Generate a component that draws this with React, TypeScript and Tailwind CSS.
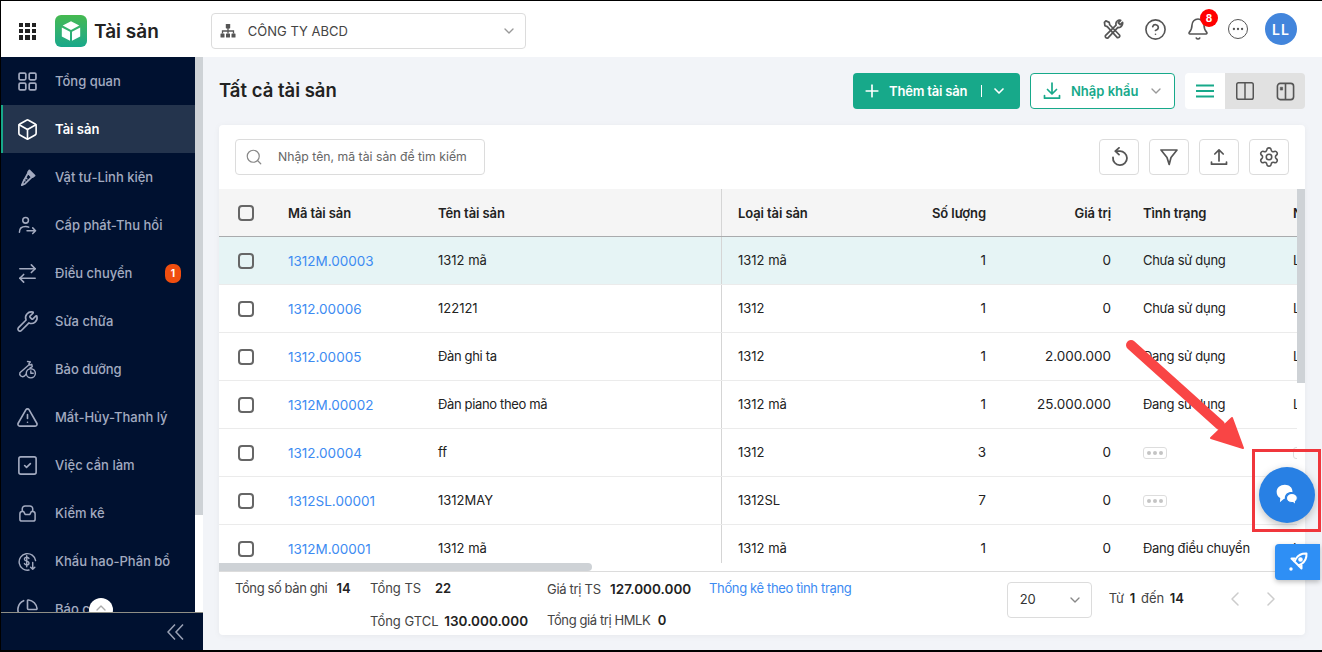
import React from "react";
import {
  Box,
  ChartPie,
  ChevronDown,
  ChevronLeft,
  ChevronRight,
  ChevronUp,
  CircleHelp,
  Bell,
  Columns2,
  Ellipsis,
  Plus,
  Search,
  Settings,
  SquareCheck,
  TriangleAlert,
  Wrench,
  ArrowRightLeft,
} from "lucide-react";

type IconProps = { className?: string };

const GridIcon = ({ className }: IconProps) => (
  <svg viewBox="0 0 18 18" fill="none" stroke="currentColor" strokeWidth="1.6" className={className}>
    <rect x="1" y="1" width="6.4" height="6.4" rx="1.2" />
    <rect x="10.6" y="1" width="6.4" height="6.4" rx="1.2" />
    <rect x="1" y="10.6" width="6.4" height="6.4" rx="1.2" />
    <rect x="10.6" y="10.6" width="6.4" height="6.4" rx="1.2" />
  </svg>
);

const ScrewIcon = ({ className }: IconProps) => (
  <svg viewBox="0 0 20 20" fill="none" stroke="currentColor" strokeWidth="1.8" strokeLinejoin="round" className={className}>
    <path d="M12 2.500l5.500 5.500-2 1.500-5-5z" fill="currentColor" />
    <path d="M10.500 5.500l4 4-7 7-3.500 1.500 1.500-3.500z" />
    <path d="M6 12l2 2M8 10l2 2" strokeWidth="1.2" />
  </svg>
);

const UserArrowIcon = ({ className }: IconProps) => (
  <svg viewBox="0 0 20 20" fill="none" stroke="currentColor" strokeWidth="1.6" strokeLinecap="round" strokeLinejoin="round" className={className}>
    <circle cx="8" cy="4.500" r="3" />
    <path d="M1.500 17c0-4 2.500-6 6.500-6 1.300 0 2.400.2 3.300.7" />
    <path d="M9.500 15.500h9M15.500 12.500l3 3-3 3" />
  </svg>
);

const MaintainIcon = ({ className }: IconProps) => (
  <svg viewBox="0 0 20 20" fill="none" stroke="currentColor" strokeWidth="1.5" strokeLinecap="round" strokeLinejoin="round" className={className}>
    <path d="M10 1.500l3 .5-1.500 2 1 1.500 2-1 .5 2.500-2.500 1.500M11 5.500l-9 8a3 3 0 0 0 4.500 3.500l2-2" />
    <circle cx="13.500" cy="14" r="4.800" />
    <path d="M13.500 11.500V14h2.500" />
  </svg>
);

const TrayIcon = ({ className }: IconProps) => (
  <svg viewBox="0 0 20 20" fill="none" stroke="currentColor" strokeWidth="1.6" strokeLinejoin="round" className={className}>
    <path d="M4.500 8V5a3 3 0 0 1 3-3h5a3 3 0 0 1 3 3v3" />
    <path d="M2 10.500c0-1.300 1-2.500 2.500-2.500H6l1.500 3h5L14 8h1.500c1.500 0 2.500 1.200 2.500 2.500V16a2 2 0 0 1-2 2H4a2 2 0 0 1-2-2z" />
  </svg>
);

const DollarIcon = ({ className }: IconProps) => (
  <svg viewBox="0 0 20 20" fill="none" stroke="currentColor" strokeWidth="1.500" strokeLinecap="round" strokeLinejoin="round" className={className}>
    <path d="M18.500 9a8.700 8.700 0 1 0-7 10" />
    <path d="M11.500 6.800c-.5-.9-1.300-1.300-2.300-1.300-1.400 0-2.400.8-2.400 2 0 2.700 4.800 1.400 4.800 4 0 1.200-1 2-2.400 2-1.100 0-1.900-.5-2.400-1.300M9.200 4v11.500" />
    <path d="M15.500 11v7M13.300 16l2.200 2.200 2.200-2.200" />
  </svg>
);

const ToolsIcon = ({ className }: IconProps) => (
  <svg viewBox="0 0 22 22" fill="none" stroke="currentColor" strokeWidth="1.800" strokeLinecap="round" strokeLinejoin="round" className={className}>
    <path d="M3 2l3.500 1.500L7 6l10.500 11a2 2 0 0 1-2.500 2.500L4.500 8 2 7 1.500 3.500z" />
    <path d="M20.500 3.500L18 6l-2-2 2.500-2.500c-2.500-.8-5 .8-5 3.500 0 .6.100 1 .2 1.400L2.500 17.500a2 2 0 0 0 2.500 2.500L15.600 8.800c2.600.7 5.500-1.700 4.900-5.300z" />
  </svg>
);

const OrgIcon = ({ className }: IconProps) => (
  <svg viewBox="0 0 16 16" className={className}>
    <g fill="currentColor">
      <rect x="5.800" y="1" width="4.400" height="4.400" rx="0.6" />
      <rect x="0.500" y="10.500" width="4" height="4" rx="0.6" />
      <rect x="6" y="10.500" width="4" height="4" rx="0.6" />
      <rect x="11.500" y="10.500" width="4" height="4" rx="0.6" />
    </g>
    <path d="M8 5v5.500M2.500 10.500V8h11v2.500" fill="none" stroke="currentColor" strokeWidth="1.300" />
  </svg>
);

const DownloadTray = ({ className }: IconProps) => (
  <svg viewBox="0 0 18 18" fill="none" stroke="currentColor" strokeWidth="1.700" strokeLinecap="round" strokeLinejoin="round" className={className}>
    <path d="M9 1v10.500M4.500 7.500L9 12l4.500-4.500" />
    <path d="M1.500 13.500v2.700h15v-2.700" />
  </svg>
);

const UploadTray = ({ className }: IconProps) => (
  <svg viewBox="0 0 18 18" fill="none" stroke="currentColor" strokeWidth="1.700" strokeLinecap="round" strokeLinejoin="round" className={className}>
    <path d="M9 13V2M4.800 6L9 1.800 13.200 6" />
    <path d="M1.500 14v2.200h15V14" />
  </svg>
);

const ReloadIcon = ({ className }: IconProps) => (
  <svg viewBox="0 0 20 20" fill="none" stroke="currentColor" strokeWidth="1.800" strokeLinecap="round" strokeLinejoin="round" className={className}>
    <path d="M4 10.500a7 7 0 1 0 6.500-6.300H7" />
    <path d="M10 .8L6.300 4.200 10 7.600" />
  </svg>
);

const FilterIcon = ({ className }: IconProps) => (
  <svg viewBox="0 0 20 20" fill="none" stroke="currentColor" strokeWidth="1.700" strokeLinejoin="round" className={className}>
    <path d="M2 3h16l-6 7.500-1.800 7L8 10.500z" />
  </svg>
);

const HamburgerIcon = ({ className }: IconProps) => (
  <svg viewBox="0 0 18 14" fill="currentColor" className={className}>
    <rect y="0.500" width="18" height="2" />
    <rect y="6" width="18" height="2" />
    <rect y="11.500" width="18" height="2" />
  </svg>
);

const SplitPanelIcon = ({ className }: IconProps) => (
  <svg viewBox="0 0 20 20" fill="none" stroke="currentColor" strokeWidth="1.700" className={className}>
    <rect x="1.500" y="1.500" width="17" height="17" rx="3" />
    <path d="M10 1.500v17" />
    <path d="M4.500 5.500H7v3H4.500z" fill="currentColor" strokeWidth="0.6" />
  </svg>
);

const CollapseIcon = ({ className }: IconProps) => (
  <svg viewBox="0 0 17 16" fill="none" stroke="currentColor" strokeWidth="1.500" className={className}>
    <path d="M8 .5L1 8l7 7.500M16 .5L9 8l7 7.500" />
  </svg>
);

const CubeLogo = () => (
  <div className="flex h-8 w-8 items-center justify-center rounded-md bg-gradient-to-b from-[#45b94f] to-[#17a88a]">
    <svg viewBox="0 0 24 24" className="h-6 w-6" fill="#fff">
      <path d="M12 2.200l8.300 4.400L12 11 3.700 6.600z" />
      <path d="M2.800 8.500l8.200 4.300v9L2.800 17.500z" />
      <path d="M21.200 8.500l-8.200 4.300v9l8.200-4.300z" />
    </svg>
  </div>
);

const SMALL = "h-[19px] w-[19px]";
// lucide icons carry inner padding, so they are drawn larger to reach the same visual size
const LARGE = "-mx-[2px] h-[23px] w-[23px] [stroke-width:1.700]";

const navItems: { label: string; icon: React.ComponentType<IconProps>; size: string; active?: boolean; badge?: string }[] = [
  { label: "Tổng quan", icon: GridIcon, size: SMALL },
  { label: "Tài sản", icon: Box, size: LARGE, active: true },
  { label: "Vật tư-Linh kiện", icon: ScrewIcon, size: SMALL },
  { label: "Cấp phát-Thu hồi", icon: UserArrowIcon, size: SMALL },
  { label: "Điều chuyển", icon: ArrowRightLeft, size: LARGE, badge: "1" },
  { label: "Sửa chữa", icon: Wrench, size: LARGE },
  { label: "Bảo dưỡng", icon: MaintainIcon, size: SMALL },
  { label: "Mất-Hủy-Thanh lý", icon: TriangleAlert, size: LARGE },
  { label: "Việc cần làm", icon: SquareCheck, size: LARGE },
  { label: "Kiểm kê", icon: TrayIcon, size: SMALL },
  { label: "Khấu hao-Phân bổ", icon: DollarIcon, size: SMALL },
  { label: "Báo cáo", icon: ChartPie, size: LARGE },
];

const rows = [
  { code: "1312M.00003", name: "1312 mã", tightName: false, type: "1312 mã", qty: "1", value: "0", status: "Chưa sử dụng", next: "L", selected: true },
  { code: "1312.00006", name: "122121", tightName: false, type: "1312", qty: "1", value: "0", status: "Chưa sử dụng", next: "L" },
  { code: "1312.00005", name: "Đàn ghi ta", tightName: true, type: "1312", qty: "1", value: "2.000.000", status: "Đang sử dụng", next: "L" },
  { code: "1312M.00002", name: "Đàn piano theo mã", tightName: true, type: "1312 mã", qty: "1", value: "25.000.000", status: "Đang sử dụng", next: "L" },
  { code: "1312.00004", name: "ff", tightName: false, type: "1312", qty: "3", value: "0", status: "", next: "" },
  { code: "1312SL.00001", name: "1312MAY", tightName: false, type: "1312SL", qty: "7", value: "0", status: "", next: "" },
  { code: "1312M.00001", name: "1312 mã", tightName: false, type: "1312 mã", qty: "1", value: "0", status: "Đang điều chuyển", next: "L" },
];

const Checkbox = () => <span className="block h-4 w-4 rounded-[4px] border-2 border-[#666]" />;

const MoreChip = () => (
  <span className="flex h-3 w-6 items-center justify-center gap-[2px] rounded-[3px] border border-[#ddd]">
    <i className="h-1 w-1 rounded-full bg-[#c4c4c4]" />
    <i className="h-1 w-1 rounded-full bg-[#c4c4c4]" />
    <i className="h-1 w-1 rounded-full bg-[#c4c4c4]" />
  </span>
);

const ToolButton = ({ children }: { children: React.ReactNode }) => (
  <button className="flex h-9 w-10 items-center justify-center rounded border border-[#dcdcdc] bg-white text-[#555]">
    {children}
  </button>
);

export default function App() {
  return (
    <div className="relative flex h-[652px] w-[1322px] flex-col overflow-hidden border-t border-l border-b-2 border-black bg-white font-['Inter',sans-serif] text-[13px] text-[#222]">
      {/* Header */}
      <header className="flex h-[56px] shrink-0 items-center bg-white pr-[25px]">
        <div className="ml-[18px] mt-[4px] grid h-[17px] w-[17px] grid-cols-3 gap-[2px]">
          {Array.from({ length: 9 }).map((_, i) => (
            <i key={i} className="bg-[#222]" />
          ))}
        </div>
        <div className="ml-[19px] mt-[4px]">
          <CubeLogo />
        </div>
        <span className="ml-[7px] mt-[6px] text-[19px] font-semibold text-[#222]">Tài sản</span>
        <div className="ml-[52px] mt-[4px] flex h-9 w-[315px] items-center rounded border border-[#dcdcdc] px-2">
          <OrgIcon className="h-4 w-4 text-[#555]" />
          <span className="ml-[12px] pt-[2px] text-[13px] text-[#444]">CÔNG TY ABCD</span>
          <ChevronDown className="ml-auto mr-0 h-4 w-4 text-[#999]" />
        </div>
        <div className="ml-auto flex items-center text-[#555]">
          <ToolsIcon className="h-[21px] w-[21px]" />
          <CircleHelp className="ml-[20px] h-[23px] w-[23px]" strokeWidth={1.7} />
          <div className="relative ml-[19px]">
            <Bell className="h-[24px] w-[24px]" strokeWidth={1.6} />
            <span className="absolute -right-[8px] -top-[8px] flex h-[18px] w-[18px] items-center justify-center rounded-full bg-[#f00] text-[10px] font-bold text-white">
              8
            </span>
          </div>
          <div className="ml-[18px] flex h-5 w-5 items-center justify-center rounded-full border-[1.6px] border-[#555]">
            <Ellipsis className="h-3.5 w-3.5" />
          </div>
          <div className="ml-[17px] flex h-8 w-8 items-center justify-center rounded-full bg-[#4285dc] text-[14px] font-semibold tracking-[1px] text-white">
            LL
          </div>
        </div>
      </header>

      <div className="flex min-h-0 flex-1">
        {/* Sidebar */}
        <aside className="relative flex w-[202px] shrink-0 flex-col">
          <div className="flex min-h-0 flex-1">
            <nav className="min-h-0 w-[194px] overflow-hidden bg-[#001130]">
              {navItems.map((item) => {
                const Icon = item.icon;
                return (
                  <div
                    key={item.label}
                    className={
                      item.active
                        ? "flex h-12 items-center border-l-2 border-[#17a88a] bg-[#24344d] pl-[15px] font-semibold text-white"
                        : "flex h-12 items-center pl-[17px] font-medium text-[#a3abc0]"
                    }
                  >
                    <Icon className={`shrink-0 ${item.size}`} />
                    <span className="ml-[18px] pt-[2px] text-[13px]">{item.label}</span>
                    {item.badge && (
                      <span className="ml-auto mr-[14px] flex h-[19px] w-4 items-center justify-center rounded-[7px] bg-[#f04e0f] text-[10px] font-bold text-white">
                        {item.badge}
                      </span>
                    )}
                  </div>
                );
              })}
            </nav>
            <div className="w-2 bg-white">
              <div className="h-[458px] bg-[#ced2d6]" />
            </div>
          </div>
          <div className="relative z-10 flex h-[38px] shrink-0 items-center justify-end border-t border-[#8f8f86] bg-[#001130] pr-[19px] text-[#9aa2b5]">
            <CollapseIcon className="h-4 w-[17px]" />
          </div>
          <span className="absolute bottom-[28px] left-[88px] flex h-6 w-6 items-start justify-center rounded-full bg-white">
            <ChevronUp className="mt-[2px] h-4 w-4 text-[#aaa]" />
          </span>
        </aside>

        {/* Content */}
        <main className="flex min-w-0 flex-1 flex-col bg-[#f2f4f8] pb-[15px] pl-4 pr-[17px] pt-[16px]">
          <div className="flex h-[36px] shrink-0 items-center">
            <h1 className="text-[18.500px] font-semibold text-[#222]">Tất cả tài sản</h1>
            <div className="ml-auto flex items-center">
              <button className="flex h-9 w-[167px] items-center rounded bg-[#17a98a] pl-[9px] text-white">
                <Plus className="h-[20px] w-[20px]" strokeWidth={2} />
                <span className="ml-[7px] pt-[2px] text-[13px] font-semibold tracking-[-0.2px]">Thêm tài sản</span>
                <i className="ml-[14px] h-3 w-px bg-white" />
                <ChevronDown className="ml-[9px] h-4 w-4" strokeWidth={2.5} />
              </button>
              <button className="ml-[10px] flex h-9 w-[145px] items-center rounded border border-[#17a98a] bg-white pl-[12px] text-[#17a98a]">
                <DownloadTray className="h-[18px] w-[18px]" />
                <span className="ml-[10px] pt-[2px] text-[13px] font-semibold">Nhập khẩu</span>
                <ChevronDown className="ml-[10px] h-4 w-4 text-[#999]" />
              </button>
              <div className="ml-[10px] flex h-9 w-[120px] overflow-hidden rounded">
                <span className="flex w-10 items-center justify-center bg-white text-[#17a98a]">
                  <HamburgerIcon className="h-[14px] w-[18px]" />
                </span>
                <span className="flex w-10 items-center justify-center bg-[#e1e1e1] text-[#555]">
                  <Columns2 className="h-[22px] w-[22px]" strokeWidth={1.6} />
                </span>
                <span className="flex w-10 items-center justify-center bg-[#e1e1e1] text-[#555]">
                  <SplitPanelIcon className="h-[19px] w-[19px]" />
                </span>
              </div>
            </div>
          </div>

          <section className="mt-[16px] flex min-h-0 flex-1 flex-col rounded bg-white shadow-[0_1px_6px_rgba(0,0,0,0.05)]">
            <div className="flex h-[64px] shrink-0 items-center px-4">
              <div className="flex h-9 w-[250px] items-center rounded border border-[#dcdcdc] px-[9px]">
                <Search className="h-[18px] w-[18px] text-[#888]" strokeWidth={1.6} />
                <span className="ml-[15px] whitespace-nowrap text-[12.250px] text-[#666]">
                  Nhập tên, mã tài sản để tìm kiếm
                </span>
              </div>
              <div className="ml-auto flex gap-[10px]">
                <ToolButton>
                  <ReloadIcon className="h-5 w-5" />
                </ToolButton>
                <ToolButton>
                  <FilterIcon className="h-5 w-5" />
                </ToolButton>
                <ToolButton>
                  <UploadTray className="h-[18px] w-[18px]" />
                </ToolButton>
                <ToolButton>
                  <Settings className="h-[22px] w-[22px]" strokeWidth={1.7} />
                </ToolButton>
              </div>
            </div>

            {/* Table */}
            <div className="flex min-h-0 flex-1 flex-col">
              <div className="flex min-h-0 flex-1">
                <div className="relative min-w-0 flex-1 overflow-hidden">
                  <div className="flex h-12 items-center border-b border-[#a9abad] bg-[#f5f5f5] font-semibold tracking-[-0.1px] text-[#222]">
                    <div className="flex w-[69px] shrink-0 justify-start pl-[19px]">
                      <Checkbox />
                    </div>
                    <div className="w-[150px] shrink-0 pt-[2px]">Mã tài sản</div>
                    <div className="flex h-full w-[284px] shrink-0 items-center border-r border-[#d5d5d5] pt-[2px]">Tên tài sản</div>
                    <div className="w-[152px] shrink-0 pl-4 pt-[2px]">Loại tài sản</div>
                    <div className="w-[112px] shrink-0 pt-[2px] text-right">Số lượng</div>
                    <div className="w-[125px] shrink-0 pt-[2px] text-right">Giá trị</div>
                    <div className="w-[150px] shrink-0 pl-8 pt-[2px]">Tình trạng</div>
                    <div className="ml-[32px] shrink-0 pt-[2px]">N</div>
                  </div>
                  {rows.map((r) => (
                    <div
                      key={r.code}
                      className={`flex h-12 items-center border-b border-[#ebebeb] ${r.selected ? "bg-[#e6f4f5]" : "bg-white"}`}
                    >
                      <div className="flex w-[69px] shrink-0 justify-start pl-[19px]">
                        <Checkbox />
                      </div>
                      <div className="w-[150px] shrink-0 pt-[2px] text-[13.500px] text-[#3d8bf2]">{r.code}</div>
                      <div className={`flex h-full w-[284px] shrink-0 items-center border-r border-[#d5d5d5] ${r.tightName ? "tracking-[-0.35px]" : ""}`}>
                        {r.name}
                      </div>
                      <div className="w-[152px] shrink-0 pl-4">{r.type}</div>
                      <div className="w-[112px] shrink-0 text-right text-[13.500px]">{r.qty}</div>
                      <div className="w-[125px] shrink-0 text-right text-[13.500px]">{r.value}</div>
                      <div className="w-[150px] shrink-0 pl-8 tracking-[-0.3px]">{r.status || <MoreChip />}</div>
                      <div className="ml-[32px] shrink-0">{r.next || <MoreChip />}</div>
                    </div>
                  ))}
                </div>
                <div className="w-2 shrink-0 bg-white">
                  <div className="h-[194px] bg-[#ced2d6]" />
                </div>
              </div>
              <div className="h-2 shrink-0 bg-white">
                <div className="h-full w-[373px] rounded-r bg-[#ced2d6]" />
              </div>
            </div>

            {/* Footer */}
            <div className="flex h-[64px] shrink-0 border-t border-[#dcdcdc] pl-4 pr-[22px] text-[13px] text-[#444]">
              <div className="grid grid-cols-[135px_177px_162px_auto] grid-rows-[32px_32px] items-center pt-px">
                <div className="whitespace-nowrap tracking-[-0.4px]">
                  Tổng số bản ghi <b className="ml-1.5 font-semibold tracking-normal text-[#222]">14</b>
                </div>
                <div className="whitespace-nowrap">
                  Tổng TS <b className="ml-2.5 font-semibold text-[#222]">22</b>
                </div>
                <div className="whitespace-nowrap tracking-[-0.3px]">
                  Giá trị TS <b className="ml-1.5 text-[13.500px] font-semibold tracking-normal text-[#222]">127.000.000</b>
                </div>
                <div className="whitespace-nowrap tracking-[-0.35px] text-[#3d8bf2]">Thống kê theo tình trạng</div>
                <div className="col-start-2 whitespace-nowrap">
                  Tổng GTCL <b className="ml-0.5 text-[13.500px] font-semibold text-[#222]">130.000.000</b>
                </div>
                <div className="whitespace-nowrap tracking-[-0.4px]">
                  Tổng giá trị HMLK <b className="ml-1 font-semibold tracking-normal text-[#222]">0</b>
                </div>
              </div>
              <div className="ml-auto flex h-full items-start pt-[10px]">
                <div className="flex h-9 w-[85px] items-center rounded border border-[#dcdcdc] pl-3 pr-2 text-[#333]">
                  20
                  <ChevronDown className="ml-auto h-4 w-4 text-[#888]" />
                </div>
                <div className="ml-[17px] mt-[7px] whitespace-nowrap">
                  Từ <b className="mx-0.5 font-semibold text-[#222]">1</b> đến <b className="ml-0.5 font-semibold text-[#222]">14</b>
                </div>
                <ChevronLeft className="ml-[39px] mt-[5px] h-6 w-6 text-[#ccc]" strokeWidth={1.5} />
                <ChevronRight className="ml-3 mt-[5px] h-6 w-6 text-[#ccc]" strokeWidth={1.5} />
              </div>
            </div>
          </section>
        </main>
      </div>

      {/* Floating buttons */}
      <div className="absolute left-[1258px] top-[466px] flex h-14 w-14 items-center justify-center rounded-full bg-[#2880e4] shadow-[0_3px_8px_rgba(0,0,0,0.25)]">
        <svg viewBox="0 0 22 22" className="h-6 w-6" fill="#fff">
          <path d="M9 1.500c4 0 7 2.600 7 6 0 .3 0 .6-.1.900-3.500-.6-6.900 1.800-6.900 5.100 0 .3 0 .7.1 1-.4.100-.8.100-1.100.100l-3.500 3 .3-3.800C2.600 12.700 1.500 10.500 1.500 8c0-3.600 3.300-6.500 7.500-6.500z" />
          <path d="M15.500 9.500c2.800 0 5 1.900 5 4.300 0 1.400-.7 2.600-1.800 3.400l.3 2.800-2.600-2.100h-.9c-2.800 0-5-1.800-5-4.100 0-2.400 2.200-4.300 5-4.300z" stroke="#2880e4" strokeWidth="1" />
        </svg>
      </div>
      <div className="absolute left-[1274px] top-[543px] flex h-9 w-[45px] items-center justify-center rounded-l-sm bg-[#2e8ff5] shadow-[0_2px_5px_rgba(0,0,0,0.25)]">
        <svg viewBox="0 0 20 20" className="h-5 w-5" fill="none" stroke="#fff" strokeWidth="2" strokeLinejoin="round">
          <path d="M18.500 1.500c-4.500-.3-8 1.500-10.500 5l-1.500 3 4 4 3-1.500c3.500-2.500 5.300-6 5-10.500z" />
          <circle cx="12.500" cy="7.500" r="1.300" fill="#fff" />
          <path d="M7 6.500H3.500l3 3M13.500 13v3.500l-3-3" />
          <circle cx="3" cy="17" r="1.700" fill="#fff" stroke="none" />
        </svg>
      </div>

      {/* Annotation: arrow and highlight box */}
      <div className="pointer-events-none absolute left-[1251px] top-[448px] h-[83px] w-[69px] border-[3px] border-[#f0363c]" />
      <svg className="pointer-events-none absolute -left-px -top-px h-[652px] w-[1322px]" viewBox="0 0 1322 652">
        <path d="M1131 345L1220 425" stroke="#f94545" strokeWidth="10" strokeLinecap="round" />
        <path d="M1243 448L1211 438 1232 418z" fill="#f94545" stroke="#f94545" strokeWidth="2" strokeLinejoin="round" />
      </svg>
    </div>
  );
}
